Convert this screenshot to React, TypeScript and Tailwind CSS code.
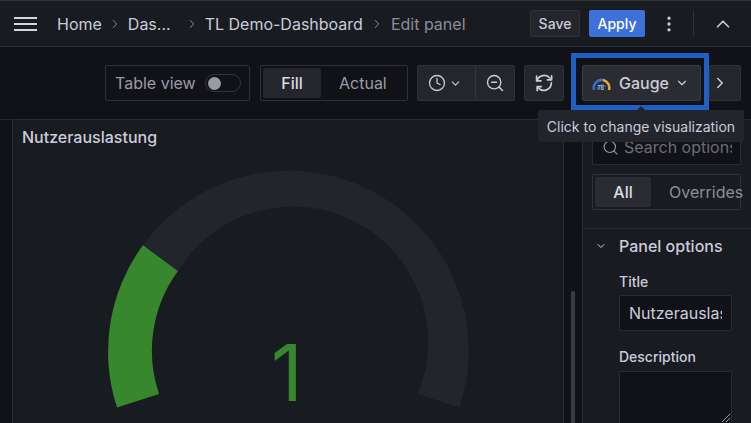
import { ChevronRight, ChevronDown, ChevronUp, Clock, ZoomOut, Search, EllipsisVertical } from "lucide-react";

function Crumb({ children, cls }: { children: string; cls?: string }) {
  return <span className={"text-[16px] leading-6 whitespace-nowrap " + (cls ?? "text-[#ccccdc]")}>{children}</span>;
}

function Sep({ cls }: { cls?: string }) {
  return <ChevronRight size={14} strokeWidth={1.6} className={"text-[#9a9aa6] shrink-0 " + (cls ?? "")} />;
}

export default function App() {
  return (
    <div className="relative w-[751px] h-[423px] overflow-hidden bg-[#111217] text-[#ccccdc] font-['Inter','Liberation_Sans',sans-serif]">
      {/* Top bar */}
      <header className="h-[47px] bg-[#181b1f] border-t border-t-[#2f3136] border-b border-b-[#2a2c31] flex items-center pl-[14px] pr-[17px]">
        <svg width="23" height="14" viewBox="0 0 23 14" className="shrink-0 mr-[20px]">
          <path d="M0 1h23M0 7h23M0 13h23" stroke="#d4d4dc" strokeWidth="2" />
        </svg>
        <Crumb>Home</Crumb>
        <Sep cls="mx-[6px]" />
        <Crumb>Das...</Crumb>
        <Sep cls="ml-[14px] mr-[6px]" />
        <Crumb>TL Demo-Dashboard</Crumb>
        <Sep cls="mx-[7px]" />
        <Crumb cls="text-[#8e8e98]">Edit panel</Crumb>
        <div className="ml-auto flex items-center">
          <button className="h-[27px] w-[50px] rounded-[2px] bg-[#24262b] border border-[#2f3136] text-[14px] font-medium text-[#ccccdc]">Save</button>
          <button className="h-[27px] w-[56px] ml-[9px] rounded-[2px] bg-[#3d71d9] text-[14px] font-medium text-white">Apply</button>
          <EllipsisVertical size={20} className="ml-[14px] text-[#ccccdc]" />
          <div className="w-px h-[27px] bg-[#2f3136] ml-[14px]" />
          <ChevronUp size={22} strokeWidth={1.8} className="ml-[18px] text-[#ccccdc]" />
        </div>
      </header>

      {/* Toolbar */}
      <div className="h-[72px] flex items-start pt-[18px] pl-[105px]">
        <div className="w-[145px] h-[36px] rounded-[2px] border border-[#2f3136] flex items-center pl-[9px] text-[#9b9ba6] text-[16px]">
          Table view
          <span className="ml-[9px] w-[36px] h-[18px] rounded-full border border-[#33353b] flex items-center pl-[2px]">
            <span className="w-[13px] h-[13px] rounded-full bg-[#9b9ba6]" />
          </span>
        </div>
        <div className="ml-[10px] w-[148px] h-[36px] rounded-[2px] border border-[#2f3136] flex items-center pl-[2px] text-[16px]">
          <span className="w-[58px] h-[30px] rounded-[2px] bg-[#24262b] flex items-center justify-center font-medium text-[#dcdce4]">Fill</span>
          <span className="ml-[18px] text-[#9b9ba6]">Actual</span>
        </div>
        <div className="ml-[9px] w-[98px] h-[36px] rounded-[2px] bg-[#24262b] border border-[#2f3136] flex items-center">
          <Clock size={18} strokeWidth={1.7} className="ml-[10px]" />
          <ChevronDown size={13} strokeWidth={2} className="ml-[3px]" />
          <div className="w-px h-full bg-[#34363c] ml-[13px]" />
          <ZoomOut size={20} strokeWidth={1.7} className="ml-[9px]" />
        </div>
        <div className="ml-[9px] w-[40px] h-[36px] rounded-[2px] bg-[#24262b] border border-[#2f3136] flex items-center justify-center">
          <svg width="20" height="20" viewBox="0 0 20 20" fill="none" stroke="#ccccdc" strokeWidth="1.7" strokeLinecap="round" strokeLinejoin="round">
            <path d="M3 7.5A7.6 7.6 0 0 1 16 5.2" />
            <path d="M17.4 9.8A7.6 7.6 0 0 1 4.2 14.9" />
            <path d="M2.6 3.2V7.8H7" />
            <path d="M17.6 2.8V6.8H13.4" />
            <path d="M3.2 17.6V13.6H7.2" />
          </svg>
        </div>
        <div className="ml-[18px] w-[119px] h-[36px] rounded-[2px] bg-[#2a2c31] border border-[#3a3c42] flex items-center pl-[9px]">
          <svg width="19" height="15" viewBox="0 0 19 15" className="shrink-0">
            <path d="M2 14A8 8 0 0 1 11 4" fill="none" stroke="#3a6fc4" strokeWidth="2.5" />
            <path d="M11 4A8 8 0 0 1 17 14" fill="none" stroke="#e8a93a" strokeWidth="2.5" />
            <path d="M5 13A5 5 0 0 1 14 11" fill="none" stroke="#3a6fc4" strokeWidth="1" />
            <text x="5.5" y="14" fontSize="5.5" fontWeight="700" fill="#9bbcf0">78</text>
          </svg>
          <span className="ml-[8px] text-[16px] font-medium text-[#ccccdc]">Gauge</span>
          <ChevronDown size={14} strokeWidth={2} className="ml-[6px]" />
        </div>
        <div className="ml-[8px] w-[32px] h-[36px] rounded-[2px] bg-[#24262b] border border-[#2f3136] flex items-center pl-[1px]">
          <ChevronRight size={18} strokeWidth={2} />
        </div>
      </div>

      {/* Main */}
      <div className="flex h-[304px] border-t border-[#26282d]">
        <div className="w-[582px] shrink-0 pl-3 relative">
          <section className="w-[552px] h-[310px] -mt-px bg-[#181b1f] border border-[#2a2c31] rounded-[2px] relative">
            <h2 className="pl-[9px] pt-[5px] text-[16px] leading-6 font-medium text-[#ccccdc]">Nutzerauslastung</h2>
            <svg width="550" height="300" viewBox="13 120 550 300" className="absolute left-0 top-0">
              <path d="M117 407.6A180 180 0 0 1 143 245L178 271A135 135 0 0 0 159 394Z" fill="#37872d" />
              <path d="M143 245A180 180 0 0 1 459.5 407.6L417.5 394A135 135 0 0 0 178 271Z" fill="#22252b" />
            </svg>
            <div className="absolute left-[258px] top-[214px] text-[78px] leading-none text-[#37872d]">1</div>
          </section>
          <div className="absolute left-[571px] top-[171px] w-[4px] h-[140px] rounded-full bg-[#3a3c41]" />
        </div>
        <aside className="flex-1 min-w-0 bg-[#181b1f] border-l border-[#2a2c31]">
          <div className="pl-[9px] pr-[10px] pt-[12px]">
            <div className="h-[33px] rounded-[2px] bg-[#111217] border border-[#2a2c31] flex items-start pt-[2px] pl-[9px] text-[#6c6c76] text-[16px] overflow-hidden whitespace-nowrap">
              <Search size={17} strokeWidth={1.6} className="shrink-0 mr-[5px] mt-[4px] text-[#9a9aa6]" />
              <span className="w-[108px] overflow-hidden">Search options</span>
            </div>
            <div className="mt-[9px] h-[36px] rounded-[2px] border border-[#2f3136] flex items-center pl-[2px] text-[16px] whitespace-nowrap">
              <span className="w-[56px] h-[30px] shrink-0 rounded-[2px] bg-[#2a2c31] flex items-center justify-center font-medium text-[#dcdce4]">All</span>
              <span className="ml-[18px] text-[#8a8f9c]">Overrides</span>
            </div>
          </div>
          <div className="mt-[18px] border-t border-[#2a2c31] pt-[5px]">
            <div className="flex items-center h-[24px] pl-[12px]">
              <ChevronDown size={12} strokeWidth={2} className="text-[#ccccdc]" />
              <span className="ml-[12px] text-[16px] font-medium text-[#ccccdc]">Panel options</span>
            </div>
            <div className="pl-[36px] pr-[19px]">
              <div className="mt-[15px] text-[14px] leading-[18px] font-medium text-[#ccccdc]">Title</div>
              <div className="mt-[4px] h-[36px] rounded-[2px] bg-[#111217] border border-[#2a2c31] flex items-center pl-[9px] pr-[9px] text-[16px] text-[#ccccdc] whitespace-nowrap overflow-hidden">
                <span className="overflow-hidden">Nutzerauslastung</span>
              </div>
              <div className="mt-[17px] text-[14px] leading-[18px] font-medium text-[#ccccdc]">Description</div>
              <div className="mt-[5px] h-[60px] rounded-[2px] bg-[#111217] border border-[#2a2c31] relative overflow-hidden">
                <svg width="10" height="10" viewBox="0 0 10 10" className="absolute right-0 bottom-[7px]">
                  <path d="M1 9L9 1M5 9L9 5" stroke="#9a9aa6" strokeWidth="1" />
                </svg>
              </div>
            </div>
          </div>
        </aside>
      </div>

      {/* Annotation frame over the picker */}
      <div className="absolute left-[571px] top-[53px] w-[138px] h-[57px] border-[5px] border-[#1f60c4]" />

      {/* Tooltip */}
      <div className="absolute left-[538px] top-[110px] w-[206px] h-[32px] rounded-[2px] bg-[#22252b] flex items-center justify-center text-[14px] text-[#ccccdc] whitespace-nowrap">
        <span className="absolute left-1/2 -top-[4px] -ml-[4px] w-0 h-0 border-x-[4px] border-x-transparent border-b-[4px] border-b-[#22252b]" />
        Click to change visualization
      </div>
    </div>
  );
}
